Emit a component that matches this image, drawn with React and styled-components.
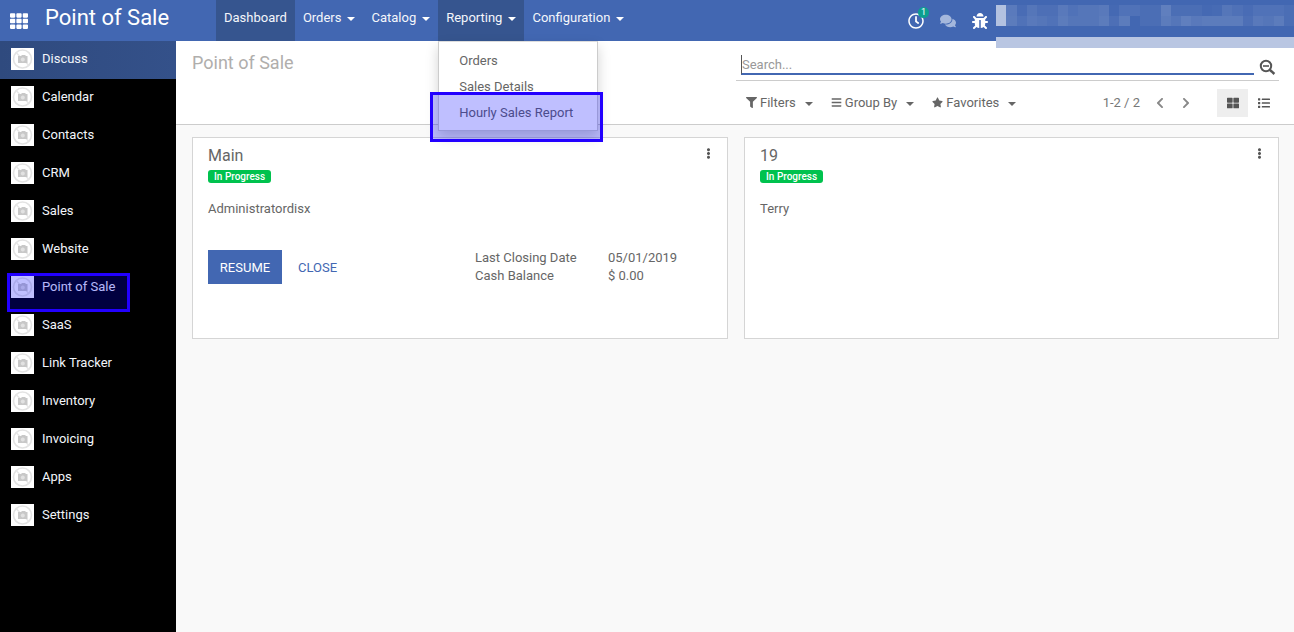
import React from 'react';
import styled, { createGlobalStyle } from 'styled-components';
import { FaTh, FaFilter, FaBars, FaStar, FaChevronLeft, FaChevronRight, FaThLarge, FaList, FaComments, FaBug, FaRegClock, FaEllipsisV } from 'react-icons/fa';

const Global = createGlobalStyle`
  html, body { margin: 0; padding: 0; height: 100%; }
  body { font-family: Roboto, "Liberation Sans", sans-serif; font-size: 13px; color: #666; background: #f9f9f9; overflow: hidden; }
  * { box-sizing: border-box; }
`;
const Page = styled.div`position: relative; width: 1294px; height: 632px; display: flex; flex-direction: column; overflow: hidden;`;
const Navbar = styled.header`height: 41px; flex: none; background: #4267b2; color: #fff; display: flex; align-items: stretch;`;
const AppsButton = styled.div`width: 45px; display: flex; padding-left: 10px; align-items: center; font-size: 18px;`;
const Brand = styled.div`width: 171px; font-size: 22px; line-height: 36px; color: #fff;`;
const NavItem = styled.div`position: relative; display: flex; align-items: center; padding: 0 8px 5px; line-height: 26px; background: ${p => p.$active ? '#36558f' : 'transparent'}; color: #f4f6fb;`;
const Caret = styled.span`display: inline-block; width: 0; height: 0; margin-left: ${p => p.$gap || 6}px; margin-top: 2px; border-left: 4px solid transparent; border-right: 4px solid transparent; border-top: 4px solid ${p => p.$color || '#fff'};`;
const Tray = styled.div`margin-left: auto; display: flex; align-items: center; width: 394px; padding: 0 0 0 0;`;
const TrayIcon = styled.span`position: relative; width: 32px; display: flex; justify-content: center; font-size: 16px; margin-top: 0; color: ${p => p.$dim ? '#a4b7dc' : '#fff'};`;
const Badge = styled.span`position: absolute; top: -6px; left: 18px; min-width: 11px; height: 11px; border-radius: 6px; background: #0b9f8f; color: #fff; font-size: 9px; line-height: 11px; text-align: center;`;
const Menu = styled.div`position: absolute; top: 41px; left: 0; width: 160px; height: 90px; padding-top: 6px; background: #fff; border: 1px solid #ccc; border-top-color: #ddd; box-shadow: 0 6px 12px rgba(0,0,0,.175); z-index: 3;`;
const MenuItem = styled.div`height: 26px; line-height: 26px; padding-left: 20px; color: #666; white-space: nowrap;`;
const Main = styled.div`flex: 1; display: flex; min-height: 0;`;
const Sidebar = styled.nav`width: 176px; flex: none; background: #000; color: #fff;`;
const SideRow = styled.div`height: 38px; display: flex; padding: 7px 0 0 11px; gap: 8px; line-height: 22px; color: #f2f5fa; background: ${p => p.$active ? 'linear-gradient(90deg,#2f4a7e,#34518a)' : 'transparent'};`;
const Content = styled.main`flex: 1; min-width: 0;`;
const ControlPanel = styled.section`height: 84px; background: #fff; border-bottom: 1px solid #ccc; display: flex; justify-content: space-between; padding: 0 15px 0 16px;`;
const PageTitle = styled.h1`margin: 0; padding-top: 11px; font-size: 18px; line-height: 22px; font-weight: 400; color: #b0aeac;`;
const RightPanel = styled.div`width: 543px; display: flex; flex-direction: column;`;
const SearchRow = styled.div`height: 40px; border-bottom: 1px solid #ccc; display: flex; padding: 14px 0 0 5px;`;
const SearchField = styled.div`position: relative; width: 513px; height: 20px; border-bottom: 2px solid #4267b2; line-height: 20px; color: #999; border-left: 1px solid #555; height: 20px;`;
const SearchText = styled.span`position: relative; top: 0;`;
const SearchIconWrap = styled.span`margin: 4px 0 0 5px; display: block;`;
const ToolRow = styled.div`flex: 1; display: flex; align-items: center; padding-left: 10px; padding-bottom: 5px; padding-top: 5px;`;
const Tool = styled.span`display: flex; align-items: center; margin-right: 18px; gap: 3px; color: #666; svg { font-size: 11px; }`;
const Pager = styled.span`margin-left: auto; color: #777; display: flex; align-items: center;`;
const PagerArrow = styled.span`display: flex; font-size: 12px; color: #888; width: 26px; justify-content: center;`;
const ViewButton = styled.span`width: 31px; height: 28px; display: flex; align-items: center; justify-content: center; font-size: 12px; color: #555; background: ${p => p.$active ? '#eee' : 'transparent'};`;
const Cards = styled.div`display: grid; grid-template-columns: 536px 535px; gap: 16px; padding: 12px 0 0 16px;`;
const Card = styled.article`position: relative; height: 202px; background: #fff; border: 1px solid #d5d5d5; padding: 7px 15px;`;
const CardTitle = styled.div`font-size: 16px; line-height: 22px; color: #666;`;
const Status = styled.span`display: inline-block; height: 13px; line-height: 13px; padding: 0 6px; margin-top: 3px; background: #00c24e; color: #fff; border-radius: 3px; font-size: 10px; font-weight: 500; vertical-align: top;`;
const StatusLine = styled.div`height: 16px;`;
const Owner = styled.div`margin-top: 16px; line-height: 20px; color: #666;`;
const CardBody = styled.div`display: flex; margin-top: 30px;`;
const Actions = styled.div`width: 267px; display: flex; align-items: center; gap: 16px;`;
const Primary = styled.span`width: 74px; height: 34px; background: #4267b2; color: #fff; display: flex; align-items: center; justify-content: center;`;
const Secondary = styled.span`color: #4267b2;`;
const Stats = styled.div`display: grid; grid-template-columns: 133px auto; grid-auto-rows: 18px; line-height: 18px; color: #666; margin-top: 0;`;
const CardMenu = styled.span`position: absolute; top: 10px; right: 13px; font-size: 11px; color: #555; display: flex;`;
const Highlight = styled.div`position: absolute; border: 3px solid #2200ff; background: rgba(0,0,255,.25); z-index: 5; pointer-events: none;`;
const Redaction = styled.div`position: absolute; left: 996px; top: 5px; width: 298px; height: 43px; display: flex; flex-direction: column; z-index: 2;`;
const PixelRow = styled.div`display: flex; height: 10.5px;`;
const Pixel = styled.span`flex: 1; background: rgba(255,255,255,${p => p.$a});`;
const BlueGap = styled.div`height: 11px; background: #4267b2;`;
const LightBand = styled.div`height: 11px; background: #b9c6e2;`;

const Broken = () => (
  <svg width="23" height="22" viewBox="0 0 23 22" style={{ flex: 'none' }}>
    <rect width="23" height="22" fill="#fff" />
    <circle cx="11.5" cy="11" r="9" fill="none" stroke="#e3e3e3" strokeWidth="1.6" />
    <path d="M5 4.5 L18 17.5" stroke="#e6e6e6" strokeWidth="1.4" />
    <path d="M7 8 h3 l1-1 h3 l1 1 h1.5 v7 H7z" fill="#c8c8c8" />
    <circle cx="11.8" cy="11.4" r="2" fill="#e2e2e2" />
  </svg>
);
const SearchGlyph = () => (
  <svg width="17" height="16" viewBox="0 0 17 16">
    <circle cx="7" cy="7" r="5.2" fill="none" stroke="#555" strokeWidth="2" />
    <path d="M4 7 h6" stroke="#555" strokeWidth="1.6" />
    <path d="M11 11 L15.4 15" stroke="#555" strokeWidth="2.4" />
  </svg>
);

const apps = ['Discuss', 'Calendar', 'Contacts', 'CRM', 'Sales', 'Website', 'Point of Sale', 'SaaS', 'Link Tracker', 'Inventory', 'Invoicing', 'Apps', 'Settings'];
const row1 = [.6,.13,.04,.1,.06,.06,.12,.08,.1,.1,.12,.02,.08,.08,.05,.05,.16,.05,.05,.05,.02,.03,.1,.07,.04,.08,.08,.08,.05];
const row2 = [.6,.14,.08,.12,.1,.08,.14,.1,.1,.1,.14,.06,.14,0,.05,.05,.14,.1,.16,.12,.14,.14,.14,.14,.06,.12,.1,.14,.05];

export default function App() {
  return (
    <Page>
      <Global />
      <Navbar>
        <AppsButton><FaTh /></AppsButton>
        <Brand>Point of Sale</Brand>
        <NavItem $active>Dashboard</NavItem>
        <NavItem>Orders<Caret /></NavItem>
        <NavItem>Catalog<Caret /></NavItem>
        <NavItem $active>Reporting<Caret />
          <Menu>
            <MenuItem>Orders</MenuItem>
            <MenuItem>Sales Details</MenuItem>
            <MenuItem>Hourly Sales Report</MenuItem>
          </Menu>
        </NavItem>
        <NavItem>Configuration<Caret /></NavItem>
        <Tray>
          <TrayIcon><FaRegClock /><Badge>1</Badge></TrayIcon>
          <TrayIcon $dim><FaComments /></TrayIcon>
          <TrayIcon><FaBug /></TrayIcon>
        </Tray>
      </Navbar>
      <Redaction>
        <PixelRow>{row1.map((a, i) => <Pixel key={i} $a={a} />)}</PixelRow>
        <PixelRow>{row2.map((a, i) => <Pixel key={i} $a={a} />)}</PixelRow>
        <BlueGap />
        <LightBand />
      </Redaction>
      <Main>
        <Sidebar>
          {apps.map((a, i) => (
            <SideRow key={a} $active={i === 0}><Broken />{a}</SideRow>
          ))}
        </Sidebar>
        <Content>
          <ControlPanel>
            <PageTitle>Point of Sale</PageTitle>
            <RightPanel>
              <SearchRow>
                <SearchField><SearchText>Search...</SearchText></SearchField>
                <SearchIconWrap><SearchGlyph /></SearchIconWrap>
              </SearchRow>
              <ToolRow>
                <Tool><FaFilter />Filters<Caret $gap={0} $color="#666" /></Tool>
                <Tool><FaBars />Group By<Caret $gap={0} $color="#666" /></Tool>
                <Tool><FaStar />Favorites<Caret $gap={0} $color="#666" /></Tool>
                <Pager>1-2 / 2
                  <PagerArrow style={{ marginLeft: 7 }}><FaChevronLeft /></PagerArrow>
                  <PagerArrow><FaChevronRight /></PagerArrow>
                </Pager>
                <ViewButton $active style={{ marginLeft: 18 }}><FaThLarge /></ViewButton>
                <ViewButton><FaList /></ViewButton>
              </ToolRow>
            </RightPanel>
          </ControlPanel>
          <Cards>
            <Card>
              <CardMenu><FaEllipsisV /></CardMenu>
              <CardTitle>Main</CardTitle>
              <StatusLine><Status>In Progress</Status></StatusLine>
              <Owner>Administratordisx</Owner>
              <CardBody>
                <Actions><Primary>RESUME</Primary><Secondary>CLOSE</Secondary></Actions>
                <Stats>
                  <span>Last Closing Date</span><span>05/01/2019</span>
                  <span>Cash Balance</span><span>$ 0.00</span>
                </Stats>
              </CardBody>
            </Card>
            <Card>
              <CardMenu><FaEllipsisV /></CardMenu>
              <CardTitle>19</CardTitle>
              <StatusLine><Status>In Progress</Status></StatusLine>
              <Owner>Terry</Owner>
            </Card>
          </Cards>
        </Content>
      </Main>
      <Highlight style={{ left: 430, top: 92, width: 173, height: 50 }} />
      <Highlight style={{ left: 7, top: 273, width: 123, height: 39 }} />
    </Page>
  );
}
